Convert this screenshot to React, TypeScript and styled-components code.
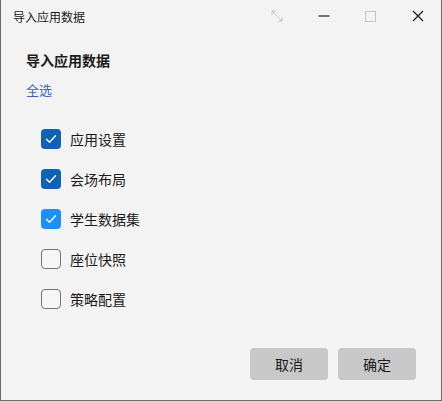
import React, { useState } from "react";
import styled, { createGlobalStyle } from "styled-components";

const Global = createGlobalStyle`
  html, body { margin: 0; padding: 0; background: #f3f3f3; }
  body { font-family: "Noto Sans CJK SC", "Noto Sans", sans-serif; }
  * { box-sizing: border-box; }
`;

const Window = styled.div`
  width: 442px;
  height: 401px;
  background: #f3f3f3;
  border-left: 1px solid #6b6b6b;
  border-right: 1px solid #6b6b6b;
  border-bottom: 1px solid #6b6b6b;
  display: flex;
  flex-direction: column;
`;

const TitleBar = styled.div`
  height: 32px;
  display: flex;
  align-items: center;
  padding-left: 12px;
`;

const TitleText = styled.div`
  flex: 1;
  font-size: 12px;
  color: #1a1a1a;
`;

const CtrlButton = styled.div`
  width: 47px;
  height: 32px;
  display: flex;
  align-items: center;
  justify-content: center;
`;

const Content = styled.div`
  flex: 1;
  display: flex;
  flex-direction: column;
  padding: 18px 24px 0 25px;
`;

const Heading = styled.div`
  font-size: 14px;
  font-weight: 700;
  color: #1a1a1a;
  line-height: 20px;
`;

const Link = styled.div`
  margin-top: 10px;
  font-size: 13px;
  color: #3b66bb;
  line-height: 20px;
`;

const List = styled.div`
  display: flex;
  flex-direction: column;
  gap: 20px;
  margin-top: 29px;
  padding-left: 15px;
`;

const Row = styled.label`
  display: flex;
  align-items: center;
  gap: 9px;
  height: 20px;
  font-size: 14px;
  color: #1a1a1a;
  cursor: default;
`;

const Box = styled.div<{ $checked: boolean; $tone: string }>`
  width: 20px;
  height: 20px;
  border-radius: 4px;
  display: flex;
  align-items: center;
  justify-content: center;
  background: ${(p) => (p.$checked ? p.$tone : "#f6f6f6")};
  border: ${(p) => (p.$checked ? "none" : "1px solid #727272")};
`;

const Footer = styled.div`
  display: flex;
  justify-content: flex-end;
  gap: 10px;
  padding: 0 25px 20px 0;
`;

const Button = styled.div`
  width: 78px;
  height: 32px;
  border-radius: 4px;
  background: #c8c8c8;
  display: flex;
  align-items: center;
  justify-content: center;
  font-size: 14px;
  color: #1a1a1a;
`;

const Check = () => (
  <svg width="12" height="10" viewBox="0 0 12 10">
    <path d="M1.5 5.2 L4.5 8.2 L10.5 1.8" stroke="#fff" strokeWidth="1.4" fill="none" strokeLinecap="round" strokeLinejoin="round" />
  </svg>
);

const items = [
  { label: "应用设置", checked: true, tone: "#0f63b5" },
  { label: "会场布局", checked: true, tone: "#0f63b5" },
  { label: "学生数据集", checked: true, tone: "#1d8ff9" },
  { label: "座位快照", checked: false, tone: "" },
  { label: "策略配置", checked: false, tone: "" },
];

export default function App() {
  const [state] = useState(items);
  return (
    <>
      <Global />
      <Window>
        <TitleBar>
          <TitleText>导入应用数据</TitleText>
          <CtrlButton>
            <svg width="14" height="14" viewBox="0 0 14 14">
              <path d="M2 2 L12 12 M2 2 L2 6 M2 2 L6 2 M12 12 L12 8 M12 12 L8 12" stroke="#c4c4c4" strokeWidth="1" fill="none" />
            </svg>
          </CtrlButton>
          <CtrlButton>
            <svg width="12" height="12" viewBox="0 0 12 12">
              <path d="M0.5 6 L11.5 6" stroke="#1a1a1a" strokeWidth="1.2" />
            </svg>
          </CtrlButton>
          <CtrlButton>
            <svg width="11" height="11" viewBox="0 0 11 11">
              <rect x="0.5" y="0.5" width="10" height="10" stroke="#c4c4c4" strokeWidth="1" fill="none" />
            </svg>
          </CtrlButton>
          <CtrlButton>
            <svg width="12" height="12" viewBox="0 0 12 12">
              <path d="M1 1 L11 11 M11 1 L1 11" stroke="#1a1a1a" strokeWidth="1.3" />
            </svg>
          </CtrlButton>
        </TitleBar>
        <Content>
          <Heading>导入应用数据</Heading>
          <Link>全选</Link>
          <List>
            {state.map((it) => (
              <Row key={it.label}>
                <Box $checked={it.checked} $tone={it.tone}>
                  {it.checked && <Check />}
                </Box>
                {it.label}
              </Row>
            ))}
          </List>
        </Content>
        <Footer>
          <Button>取消</Button>
          <Button>确定</Button>
        </Footer>
      </Window>
    </>
  );
}
